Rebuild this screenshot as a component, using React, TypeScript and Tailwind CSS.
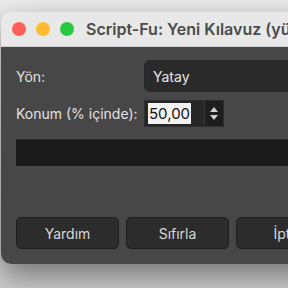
import React from "react";

function Light({ color }: { color: string }) {
  return <span className={`block h-[14px] w-[14px] rounded-full ${color}`} />;
}

function Button({ label }: { label: string }) {
  return (
    <button className="flex h-[32px] w-[103px] shrink-0 items-center justify-center rounded-[5px] border border-[#1e1e1e] bg-[#2c2c2c] text-[14px] text-[#d8d8d8]">
      {label}
    </button>
  );
}

export default function App() {
  return (
    <div
      className="relative h-[288px] w-[288px] overflow-hidden bg-gradient-to-b from-[#ececec] via-[#e0e0e0] to-[#cfcfcf]"
      style={{ fontFamily: "Inter, 'Liberation Sans', sans-serif" }}
    >
      <div className="ml-[1px] mt-[12px] h-[252px] w-[330px] overflow-hidden rounded-[10px] shadow-[0_12px_30px_rgba(0,0,0,0.45)]">
        <div className="flex h-[35px] items-center border-b border-[#cfcfcf] bg-[#e8e8e8] pl-[11px]">
          <div className="flex gap-[10px]">
            <Light color="bg-[#fe5f57]" />
            <Light color="bg-[#febc2e]" />
            <Light color="bg-[#28c840]" />
          </div>
          <span className="ml-[12px] whitespace-nowrap text-[16px] font-semibold text-[#4b4b4b]">
            Script-Fu: Yeni Kılavuz (yüzde)
          </span>
        </div>

        <div className="flex h-[217px] flex-col bg-[#474747] pl-[15px] pt-[13px]">
          <div className="flex h-[32px] items-center">
            <span className="w-[128px] text-[14px] text-[#e2e2e2]">Yön:</span>
            <div className="flex h-[32px] flex-1 items-center rounded-[6px] border border-[#262626] bg-[#2a2a2a] pl-[8px] text-[14px] text-[#e6e6e6]">
              Yatay
            </div>
          </div>

          <div className="mt-[8px] flex h-[27px] items-center">
            <span className="w-[128px] whitespace-nowrap text-[14px] text-[#e2e2e2]">
              Konum (% içinde):
            </span>
            <div className="flex h-[27px] w-[80px] items-center border border-[#2e2e2e] bg-[#262626]">
              <div className="flex flex-1 items-center pl-[3px]">
                <span className="bg-[#f2f2f2] px-[1px] text-[15px] leading-[21px] text-[#111]">
                  50,00
                </span>
              </div>
              <div className="flex h-full w-[19px] flex-col items-center justify-center gap-[3px] border-l border-[#3a3a3a] bg-[#1e1e1e]">
                <svg width="8" height="5" viewBox="0 0 8 5">
                  <path d="M0 5 L4 0 L8 5 Z" fill="#d0d0d0" />
                </svg>
                <svg width="8" height="5" viewBox="0 0 8 5">
                  <path d="M0 0 L8 0 L4 5 Z" fill="#d0d0d0" />
                </svg>
              </div>
            </div>
          </div>

          <div className="mt-[12px] h-[27px] border-t border-[#2a2a2a] bg-[#1b1b1b]" />

          <div className="mt-[51px] flex gap-[7px]">
            <Button label="Yardım" />
            <Button label="Sıfırla" />
            <Button label="İptal" />
          </div>
        </div>
      </div>
    </div>
  );
}
